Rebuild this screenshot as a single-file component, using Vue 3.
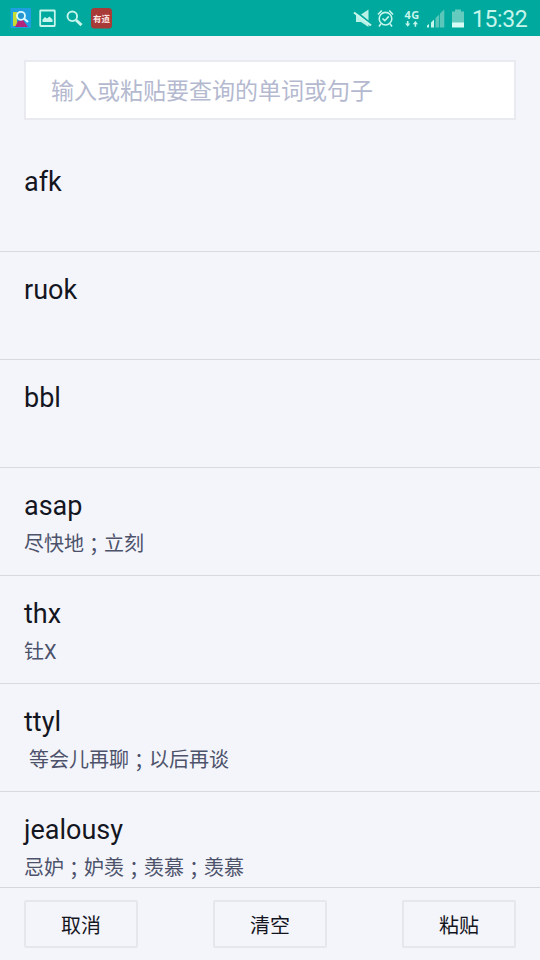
<template>
  <div class="screen">
    <header class="status-bar">
      <svg class="status-left" width="120" height="36" viewBox="0 0 120 36">
        <!-- dictionary app -->
        <rect x="10.500" y="8" width="20.500" height="20" fill="#1f9fe0" />
        <path d="M13 12h4v14h-4z" fill="#c5dc35" />
        <path d="M15 27l3-6 5-1 5 7z" fill="#b3267c" />
        <circle cx="21" cy="15.800" r="4" fill="#2796cf" stroke="#dcfaff" stroke-width="1.800" />
        <path d="M24 18.500l4 3.500" stroke="#dcfaff" stroke-width="2.200" />
        <!-- gallery -->
        <rect x="40.200" y="10.500" width="14.600" height="15.500" rx="0.500" fill="none" stroke="#c6f5ec" stroke-width="1.800" />
        <path d="M42.500 22v-2.500l2.500-2.500 2 1.500 2.500-2 3 3v2.500z" fill="#c6f5ec" />
        <!-- search -->
        <circle cx="72.300" cy="16.300" r="4.800" fill="none" stroke="#c6f5ec" stroke-width="1.900" />
        <path d="M76 20l5.500 5.200" stroke="#c6f5ec" stroke-width="3" />
        <!-- youdao -->
        <rect x="91" y="8" width="21" height="20.500" rx="3.500" fill="#a83a38" />
        <text x="101.500" y="22" class="badge-text" text-anchor="middle">有道</text>
      </svg>
      <svg class="status-right" width="120" height="36" viewBox="350 0 120 36">
        <!-- muted speaker -->
        <path d="M356 14.500h5l7.500-5v17.500l-7.500-5H356z" fill="#b9f1e7" />
        <path d="M354.500 10.500l17 13.500" stroke="#00a99d" stroke-width="2" />
        <path d="M354 12.500l17 13" stroke="#c6f5ec" stroke-width="2.200" />
        <!-- alarm -->
        <g fill="none" stroke="#c6f5ec" stroke-width="1.600">
          <circle cx="385.500" cy="18.700" r="6.300" />
          <path d="M378 14.500l3.800-4M393 14.500l-3.800-4M382.500 18.500l2.300 2.200 4-4.300M380.800 24l-1.800 2.500M390.200 24l1.800 2.500" />
        </g>
        <!-- network -->
        <text x="404.500" y="18.800" class="network-text">4G</text>
        <path d="M408.500 21v2.500h1.800l-2.600 3.200-2.600-3.200h1.800v-2.500zM414.600 26.700v-2.500h-1.800l2.600-3.200 2.600 3.200h-1.800v2.500z" fill="#c6f5ec" />
        <!-- signal -->
        <path d="M427 27.500v-2l2-1.500v3.500zM431 27.500v-5l3-3v8z" fill="#c6f5ec" />
        <path d="M435.500 27.500V18l3.700-3.500v13zM440 27.500V13.500l4.300-4v18z" fill="#5bc7bb" />
        <!-- battery -->
        <path d="M455 9.500h6v2h3v11.500h-12V11.500h3z" fill="#66cbbf" />
        <path d="M452 22.500h12v5h-12z" fill="#d8fcf5" />
      </svg>
      <span class="clock">15:32</span>
    </header>

    <div class="search">
      <input class="search-input" type="text" placeholder="输入或粘贴要查询的单词或句子" />
    </div>

    <ul class="history">
      <li v-for="item in history" :key="item.word" class="history-item">
        <div class="word">{{ item.word }}</div>
        <div class="meaning">
          <template v-for="(part, i) in item.meanings" :key="i"><span v-if="i > 0" class="sep">；</span>{{ part }}</template>
        </div>
      </li>
    </ul>

    <footer class="actions">
      <button v-for="label in actions" :key="label" class="action">{{ label }}</button>
    </footer>
  </div>
</template>

<script setup>
const history = [
  { word: 'afk', meanings: [] },
  { word: 'ruok', meanings: [] },
  { word: 'bbl', meanings: [] },
  { word: 'asap', meanings: ['尽快地', '立刻'] },
  { word: 'thx', meanings: ['钍X'] },
  { word: 'ttyl', meanings: ['\u00a0等会儿再聊', '以后再谈'] },
  { word: 'jealousy', meanings: ['忌妒', '妒羡', '羡慕', '羡慕'] },
];

const actions = ['取消', '清空', '粘贴'];
</script>

<style>
body {
  background: #f4f5fa;
}
</style>

<style scoped>
.screen {
  display: flex;
  flex-direction: column;
  width: 540px;
  height: 960px;
  overflow: hidden;
  background: #f4f5fa;
  color: #14161f;
  font-family: Roboto, "Noto Sans CJK SC", sans-serif;
}
.status-bar {
  display: flex;
  flex: none;
  align-items: center;
  height: 36px;
  background: #00a99d;
}
.status-right {
  margin-left: 230px;
}
.badge-text {
  font-size: 8.5px;
  font-weight: 700;
  fill: #ffe9e5;
}
.network-text {
  font-family: "Noto Sans", sans-serif;
  font-size: 11px;
  font-weight: 700;
  letter-spacing: 0.5px;
  fill: #c6f5ec;
}
.clock {
  margin-left: 2px;
  padding-top: 3px;
  font-size: 23px;
  line-height: 34px;
  letter-spacing: -0.4px;
  color: #c6f5ec;
}
.search {
  flex: none;
  height: 108px;
  padding: 24px 24px 0;
  box-sizing: border-box;
}
.search-input {
  display: block;
  width: 492px;
  height: 60px;
  padding: 2px 25px 0;
  box-sizing: border-box;
  border: 2px solid #e9e9f0;
  border-radius: 0;
  background: #fff;
  outline: none;
  font-family: inherit;
  font-size: 23px;
}
.search-input::placeholder {
  color: #b4b9cf;
  opacity: 1;
}
.history {
  flex: 1;
  min-height: 0;
  margin: 0;
  padding: 0;
  overflow: hidden;
  list-style: none;
}
.history-item {
  height: 108px;
  padding: 22px 24px 0;
  box-sizing: border-box;
  border-bottom: 1px solid #d9dae1;
}
.word {
  font-size: 27px;
  line-height: 32px;
}
.meaning {
  margin-top: 8px;
  font-size: 20px;
  line-height: 28px;
  color: #4d526b;
  white-space: nowrap;
}
/* the TC face keeps the full-width semicolon centred */
.sep {
  vertical-align: -2px;
  font-family: "Noto Sans CJK TC", sans-serif;
  line-height: 1;
}
.actions {
  display: flex;
  flex: none;
  justify-content: space-between;
  height: 73px;
  padding: 12px 24px;
  box-sizing: border-box;
  border-top: 1px solid #d6d7de;
}
.action {
  width: 114px;
  height: 48px;
  padding: 0;
  border: 2px solid #e6e7ed;
  border-radius: 2px;
  background: transparent;
  color: #14161f;
  font-family: inherit;
  font-size: 20px;
}
</style>
